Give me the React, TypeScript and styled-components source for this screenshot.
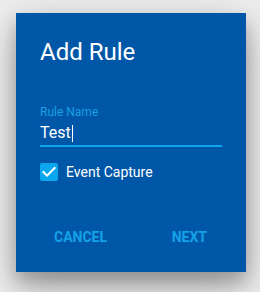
import React from "react";
import styled, { createGlobalStyle } from "styled-components";

const GlobalStyle = createGlobalStyle`
  html, body {
    margin: 0;
    padding: 0;
    background: #eeeeee;
    font-family: Roboto, "Liberation Sans", sans-serif;
  }
`;

const Page = styled.div`
  width: 260px;
  height: 292px;
  padding: 13px 14px 0 16px;
  box-sizing: border-box;
`;

const Dialog = styled.div`
  width: 230px;
  height: 259px;
  box-sizing: border-box;
  background: #0157a7;
  box-shadow: 0 14px 40px rgba(0, 0, 0, 0.28), 0 10px 16px rgba(0, 0, 0, 0.22);
  padding: 24px 24px 0 24px;
  display: flex;
  flex-direction: column;
`;

const Title = styled.h2`
  margin: 0;
  font-size: 24px;
  line-height: 30px;
  font-weight: 400;
  color: #ffffff;
`;

const Field = styled.div`
  margin-top: 37px;
  display: flex;
  flex-direction: column;
`;

const Label = styled.label`
  font-size: 12px;
  line-height: 16px;
  color: #1a9fe4;
`;

const InputRow = styled.div`
  margin-top: 3px;
  padding-bottom: 2px;
  border-bottom: 2px solid #0aa6ee;
  display: flex;
  align-items: center;
`;

const Value = styled.span`
  font-size: 16px;
  line-height: 20px;
  color: #ffffff;
`;

const Caret = styled.span`
  display: inline-block;
  width: 1px;
  height: 17px;
  background: #ffffff;
  margin-left: 1px;
`;

const CheckRow = styled.div`
  margin-top: 16px;
  display: flex;
  align-items: center;
  gap: 8px;
`;

const Box = styled.span`
  width: 18px;
  height: 18px;
  display: flex;
`;

const CheckText = styled.span`
  font-size: 14px;
  line-height: 18px;
  color: #ffffff;
`;

const Actions = styled.div`
  margin-top: 38px;
  margin-left: 6px;
  margin-right: 7px;
  display: flex;
  justify-content: space-between;
`;

const Button = styled.button`
  border: none;
  background: transparent;
  padding: 0 8px;
  height: 36px;
  line-height: 36px;
  font-family: Roboto, "Liberation Sans", sans-serif;
  font-size: 14px;
  font-weight: 700;
  color: #14a2e8;
  text-transform: uppercase;
  cursor: pointer;
`;

export default function App() {
  return (
    <>
      <GlobalStyle />
      <Page>
        <Dialog>
          <Title>Add Rule</Title>
          <Field>
            <Label>Rule Name</Label>
            <InputRow>
              <Value>Test</Value>
              <Caret />
            </InputRow>
          </Field>
          <CheckRow>
            <Box>
              <svg width="18" height="18" viewBox="3 3 18 18">
                <rect x="3" y="3" width="18" height="18" rx="2" fill="#0aa6ee" />
                <path
                  d="M10 17l-5-5 1.41-1.41L10 14.17l7.59-7.59L19 8l-9 9z"
                  fill="#ffffff"
                />
              </svg>
            </Box>
            <CheckText>Event Capture</CheckText>
          </CheckRow>
          <Actions>
            <Button>Cancel</Button>
            <Button>Next</Button>
          </Actions>
        </Dialog>
      </Page>
    </>
  );
}
